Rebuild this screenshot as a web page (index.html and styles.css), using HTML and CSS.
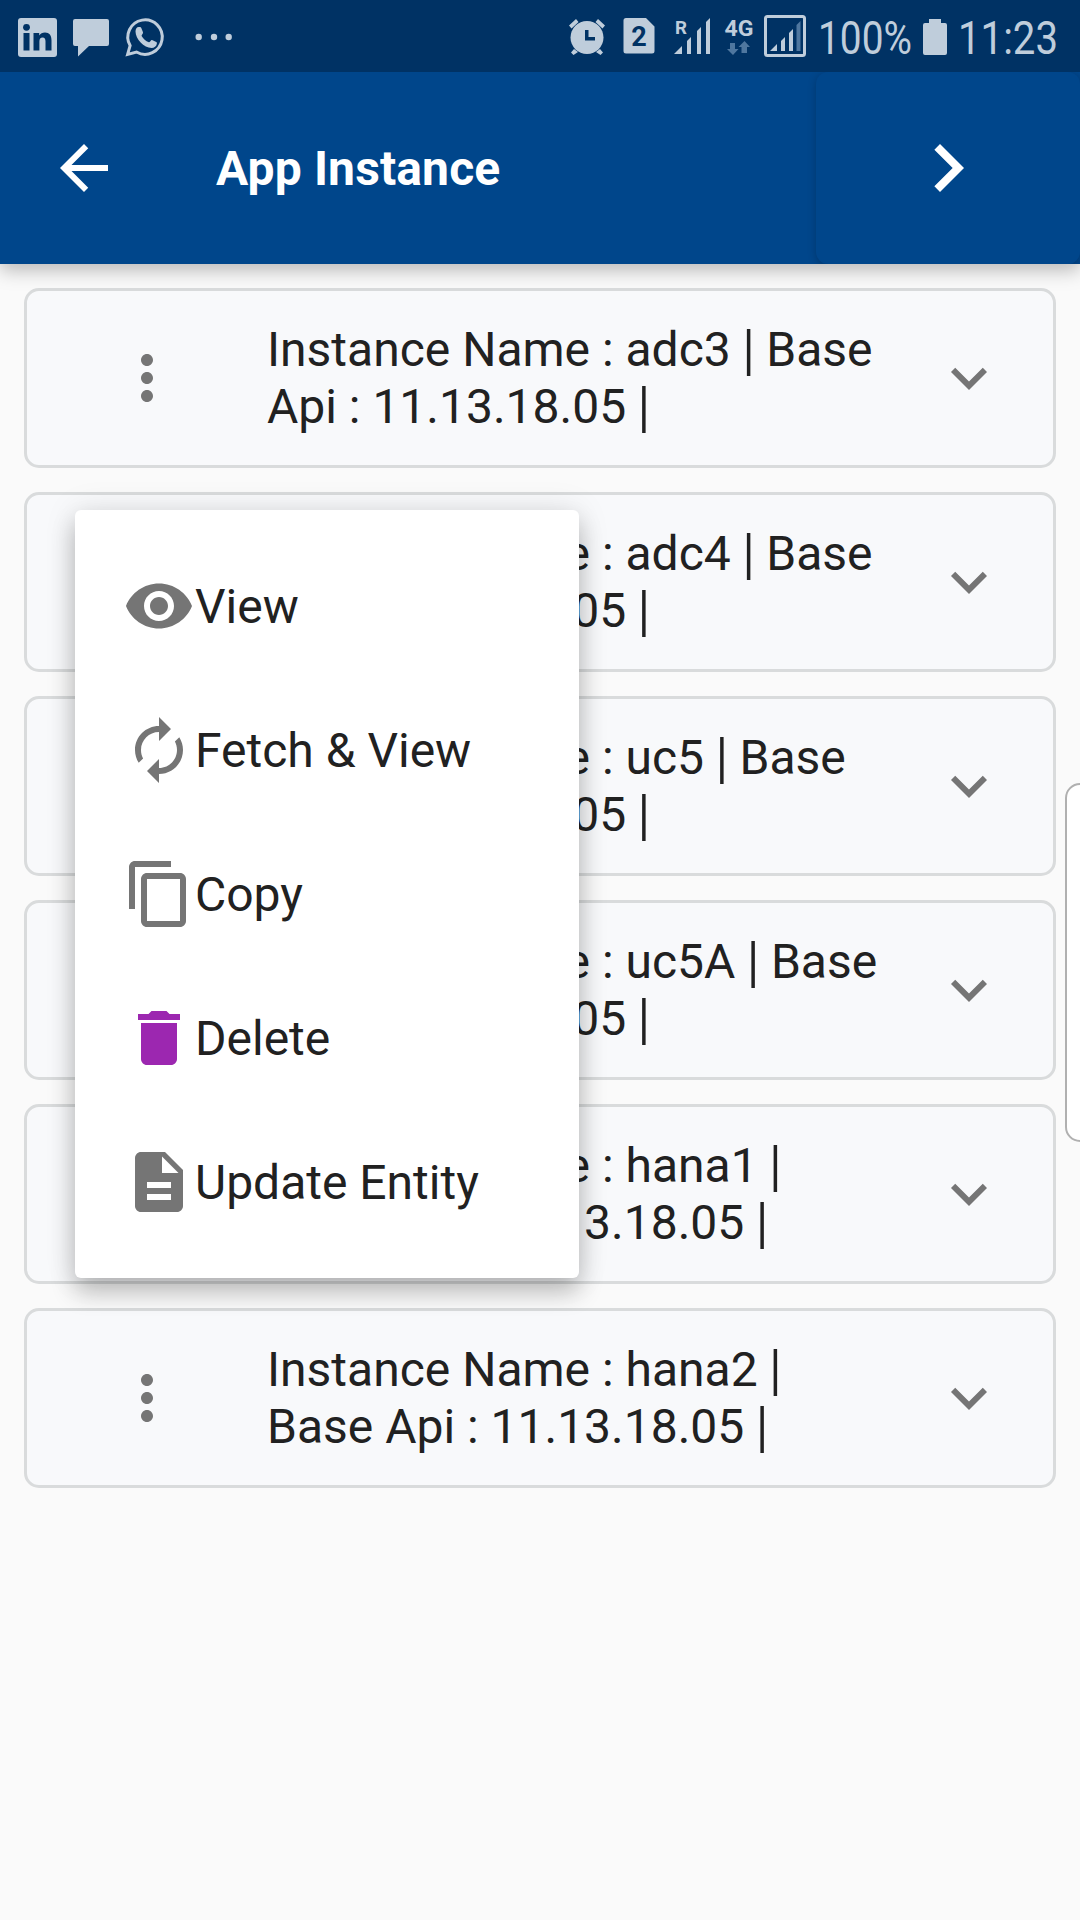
FILE: index.html
```html
<!DOCTYPE html>
<html lang="en">
<head>
<meta charset="utf-8">
<title>App Instance</title>
<link rel="stylesheet" href="styles.css">
</head>
<body>
<svg class="defs" aria-hidden="true">
  <symbol id="more" viewBox="0 0 24 24"><path d="M12 8c1.1 0 2-.9 2-2s-.9-2-2-2-2 .9-2 2 .9 2 2 2zm0 2c-1.1 0-2 .9-2 2s.9 2 2 2 2-.9 2-2-.9-2-2-2zm0 6c-1.1 0-2 .9-2 2s.9 2 2 2 2-.9 2-2-.9-2-2-2z"/></symbol>
  <symbol id="expand" viewBox="0 0 24 24"><path d="M16.59 8.59L12 13.17 7.41 8.59 6 10l6 6 6-6z"/></symbol>
</svg>

<header class="status">
  <svg class="st-linkedin" width="39" height="39" viewBox="0 0 39 39"><rect width="39" height="39" rx="3"/><circle class="cut" cx="8.5" cy="9.3" r="3.4"/><path class="cut" d="M5.5 15h6v17.5h-6zM15.500 15h5.700v2.500c1.300-2 3.200-3 5.800-3 4.400 0 6.500 2.800 6.500 8v10h-6v-9.200c0-2.500-.9-3.800-2.900-3.800-2.200 0-3.200 1.500-3.200 4v9h-5.900z"/></svg>
  <svg class="st-message" width="36" height="38" viewBox="0 0 36 38"><path d="M2 0h32a2 2 0 0 1 2 2v23a2 2 0 0 1-2 2H16L5 37.500V27H2a2 2 0 0 1-2-2V2a2 2 0 0 1 2-2z"/></svg>
  <svg class="st-whatsapp" width="40" height="40" viewBox="0 0 40 40"><path class="line" d="M2.600 37.400l2.500-8.800a17.200 17.200 0 1 1 6.400 6.400z"/><path d="M10.500 14.500c0-2.500 1.300-4.500 3.200-4.500h1.300c.6 0 1 .4 1.300 1.100l1.700 4.100c.5 1.200-1.800 2.900-1.400 3.700 1.800 3.100 4 5 7.300 6.400.8.300 2.200-2.700 3.100-2.300l4.300 2c.5.300.7.800.6 1.500-.4 3-2.700 4.400-5.300 4.400-7.700 0-16.100-8.900-16.100-16.400z"/></svg>
  <svg class="st-dots" width="38" height="8" viewBox="0 0 38 8"><circle cx="3.700" cy="4" r="3.200"/><circle cx="19" cy="4" r="3.200"/><circle cx="33.700" cy="4" r="3.200"/></svg>

  <svg class="st-alarm" width="36" height="37" viewBox="0 0 36 37"><circle cx="18" cy="19.500" r="16.500"/><path d="M0 7.500L7 1l2.500 3-7 6.500zM36 7.500L29 1l-2.500 3 7 6.500zM5 31l4 3-4.500 3L2 34.500zM31 31l-4 3 4.500 3 2.500-2.500z"/><path class="cut" d="M16 12h3.500v7h6.500v3.500H16z"/></svg>
  <svg class="st-sim" width="32" height="36" viewBox="0 0 32 36"><path d="M3 0h20l8.500 8.500V33a2.500 2.500 0 0 1-2.500 2.500H3A2.500 2.500 0 0 1 .5 33V2.500A2.500 2.500 0 0 1 3 0z"/><text class="cut" x="16" y="28" text-anchor="middle" font-size="27" font-weight="700">2</text></svg>
  <svg class="st-signal" width="37" height="37" viewBox="0 0 37 37"><text x="1" y="16" font-size="18.500" font-weight="700" textLength="12" lengthAdjust="spacingAndGlyphs">R</text><path d="M0 36l8-8v8zM13 36V23l4-4v17zM23 36V13l4-4v27zM32 36V4l4-4v36z"/></svg>
  <svg class="st-4g" width="29" height="37" viewBox="0 0 29 37"><text x="-.5" y="17" font-size="22.500" font-weight="700" textLength="29" lengthAdjust="spacingAndGlyphs">4G</text><path class="dim" d="M5 24h5v6h3.500L8 36 2 30h3zM16.500 34v-6H13.500l6-6 5.500 6h-3v6z"/></svg>
  <svg class="st-boxed" width="42" height="42" viewBox="0 0 42 42"><rect class="line thin" x="1.500" y="1.500" width="39" height="39" rx="2"/><path d="M6 36l7-7v7zM17 36V26l4-4v14zM25 36V18l4-4v22z"/><path class="dim" d="M32.500 36V10l4-4v30z"/></svg>
  <svg class="st-percent" width="92" height="40" viewBox="0 0 92 40"><text x="-1" y="37" font-size="46" textLength="94" lengthAdjust="spacingAndGlyphs">100%</text></svg>
  <svg class="st-battery" width="24" height="36" viewBox="0 0 24 36"><path d="M6 0h12v4h4a2 2 0 0 1 2 2v28a2 2 0 0 1-2 2H2a2 2 0 0 1-2-2V6a2 2 0 0 1 2-2h4z"/></svg>
  <svg class="st-time" width="97" height="40" viewBox="0 0 97 40"><text x="-2" y="37" font-size="46" textLength="100" lengthAdjust="spacingAndGlyphs">11:23</text></svg>
</header>

<nav class="appbar">
  <svg class="back" viewBox="0 0 24 24"><path d="M20 11H7.830l5.590-5.590L12 4l-8 8 8 8 1.410-1.410L7.830 13H20v-2z"/></svg>
  <h1>App Instance</h1>
  <div class="next"><svg viewBox="0 0 24 24"><path d="M10 6L8.590 7.410 13.170 12l-4.580 4.590L10 18l6-6z"/></svg></div>
</nav>

<main class="list">
  <section class="card"><svg class="icon"><use href="#more"/></svg><p>Instance Name : adc3 <span class="bar">|</span> Base Api : 11.13.18.05 <span class="bar">|</span></p><svg class="icon"><use href="#expand"/></svg></section>
  <section class="card"><svg class="icon"><use href="#more"/></svg><p>Instance Name : adc4 <span class="bar">|</span> Base Api : 11.13.18.05 <span class="bar">|</span></p><svg class="icon"><use href="#expand"/></svg></section>
  <section class="card"><svg class="icon"><use href="#more"/></svg><p>Instance Name : uc5 <span class="bar">|</span> Base Api : 11.13.18.05 <span class="bar">|</span></p><svg class="icon"><use href="#expand"/></svg></section>
  <section class="card"><svg class="icon"><use href="#more"/></svg><p>Instance Name : uc5A <span class="bar">|</span> Base Api : 11.13.18.05 <span class="bar">|</span></p><svg class="icon"><use href="#expand"/></svg></section>
  <section class="card"><svg class="icon"><use href="#more"/></svg><p>Instance Name : hana1 <span class="bar">|</span> Base Api : 11.13.18.05 <span class="bar">|</span></p><svg class="icon"><use href="#expand"/></svg></section>
  <section class="card"><svg class="icon"><use href="#more"/></svg><p>Instance Name : hana2 <span class="bar">|</span> Base Api : 11.13.18.05 <span class="bar">|</span></p><svg class="icon"><use href="#expand"/></svg></section>
</main>

<div class="menu">
  <div class="item"><svg class="icon" viewBox="0 0 24 24"><path d="M12 4.500C7 4.500 2.730 7.610 1 12c1.730 4.390 6 7.500 11 7.500s9.270-3.110 11-7.500c-1.730-4.390-6-7.500-11-7.500zM12 17c-2.760 0-5-2.240-5-5s2.240-5 5-5 5 2.240 5 5-2.240 5-5 5zm0-8c-1.660 0-3 1.340-3 3s1.340 3 3 3 3-1.340 3-3-1.340-3-3-3z"/></svg>View</div>
  <div class="item"><svg class="icon" viewBox="0 0 24 24"><path d="M12 6v3l4-4-4-4v3c-4.420 0-8 3.580-8 8 0 1.570.46 3.030 1.240 4.260L6.700 14.800c-.45-.83-.7-1.790-.7-2.800 0-3.310 2.690-6 6-6zm6.760 1.740L17.300 9.200c.44.840.7 1.790.7 2.800 0 3.310-2.690 6-6 6v-3l-4 4 4 4v-3c4.420 0 8-3.580 8-8 0-1.570-.46-3.030-1.240-4.260z"/></svg>Fetch &amp; View</div>
  <div class="item"><svg class="icon" viewBox="0 0 24 24"><path d="M16 1H4c-1.100 0-2 .9-2 2v14h2V3h12V1zm3 4H8c-1.100 0-2 .9-2 2v14c0 1.100.9 2 2 2h11c1.100 0 2-.9 2-2V7c0-1.100-.9-2-2-2zm0 16H8V7h11v14z"/></svg>Copy</div>
  <div class="item"><svg class="icon purple" viewBox="0 0 24 24"><path d="M6 19c0 1.100.9 2 2 2h8c1.100 0 2-.9 2-2V7H6v12zM19 4h-3.500l-1-1h-5l-1 1H5v2h14V4z"/></svg>Delete</div>
  <div class="item"><svg class="icon" viewBox="0 0 24 24"><path d="M14 2H6c-1.100 0-1.990.9-1.990 2L4 20c0 1.100.890 2 1.990 2H18c1.100 0 2-.9 2-2V8l-6-6zm2 16H8v-2h8v2zm0-4H8v-2h8v2zm-3-5V3.500L18.500 9H13z"/></svg>Update Entity</div>
</div>
<div class="edge"></div>
</body>
</html>
```
FILE: styles.css
```css
* { box-sizing: border-box; }
body {
  margin: 0;
  width: 1080px;
  height: 1920px;
  position: relative;
  overflow: hidden;
  background: #fafafa;
  color: #212121;
  font: 48px/57px Roboto, sans-serif;
}
svg { display: block; flex: none; overflow: visible; }
.defs { position: absolute; width: 0; height: 0; }

.status {
  display: flex;
  height: 72px;
  background: #003264;
  padding-right: 23px;
  fill: #bfcddb;
}
.status .cut { fill: #003264; }
.status .dim { fill: #4f779f; }
.status .line { fill: none; stroke: #bfcddb; stroke-width: 3; }
.status .thin { stroke-width: 3; }
.st-linkedin { margin: 18px 0 0 18px; }
.st-message { margin: 19px 0 0 16px; }
.st-whatsapp { margin: 17px 0 0 16px; }
.st-dots { margin: 33px 0 0 30px; }
.st-alarm { margin: 18px 0 0 auto; }
.st-sim { margin: 18px 0 0 18px; }
.st-signal { margin: 18px 0 0 19px; }
.st-4g { margin: 19px 0 0 14px; }
.st-boxed { margin: 15px 0 0 10px; }
.st-percent { margin: 17px 0 0 13px; }
.st-battery { margin: 19px 0 0 12px; }
.st-time { margin: 17px 0 0 13px; }

.appbar {
  display: flex;
  align-items: center;
  height: 192px;
  padding-left: 48px;
  background: #00468b;
  color: #fff;
  fill: #fff;
  box-shadow: 0 6px 18px rgba(0, 0, 0, .27);
  clip-path: inset(0 0 -40px 0);
}
.appbar h1 { margin: 0 0 0 96px; font-size: 48px; font-weight: 700; letter-spacing: .13px; }
.back { width: 72px; height: 72px; }
.next {
  display: flex;
  align-items: center;
  width: 264px;
  height: 192px;
  margin-left: auto;
  padding-left: 84px;
  border-radius: 12px;
  background: #00468b;
  box-shadow: 0 2px 8px rgba(0, 0, 0, .22);
  clip-path: inset(0 0 0 -12px);
}
.next svg { width: 96px; height: 96px; }

.list { display: flex; flex-direction: column; gap: 24px; padding: 24px; }
.card {
  display: flex;
  align-items: center;
  height: 180px;
  padding: 0 48px 0 84px;
  border: 3px solid #d9dbdc;
  border-radius: 15px;
  background: #f8f9fb;
}
.card p { margin: 0 auto 0 84px; width: 616px; }
.bar { display: inline-block; transform: scaleY(1.17); }
.icon { width: 72px; height: 72px; fill: #757575; }
.purple { fill: #9c27b0; }

.menu {
  position: absolute;
  left: 75px;
  top: 510px;
  width: 504px;
  height: 768px;
  padding: 24px 48px;
  border-radius: 6px;
  background: #fff;
  box-shadow: 0 14px 24px rgba(0, 0, 0, .24), 0 0 33px rgba(0, 0, 0, .1);
}
.item { display: flex; align-items: center; height: 144px; white-space: nowrap; }

.edge {
  position: absolute;
  left: 1065px;
  top: 783px;
  width: 30px;
  height: 359px;
  border: 2px solid #b0b0b0;
  border-radius: 20px;
  background: #fff;
}
```
